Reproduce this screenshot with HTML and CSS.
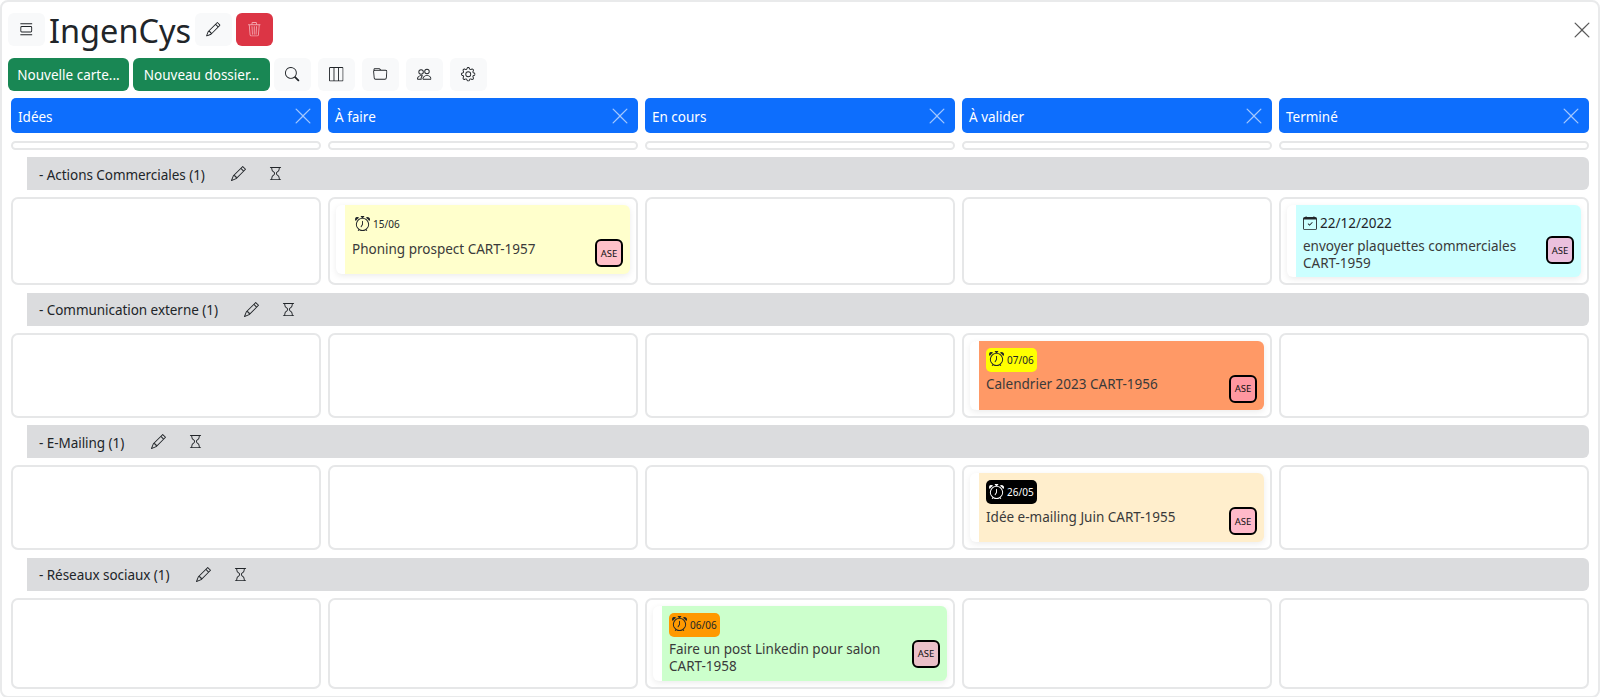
FILE: index.html
```html
<!DOCTYPE html>
<html lang="fr">
<head>
<meta charset="utf-8">
<title>IngenCys</title>
<link rel="stylesheet" href="styles.css">
</head>
<body>
<svg class="sprite" xmlns="http://www.w3.org/2000/svg">
<symbol id="i-pencil" viewBox="0 0 16 16"><path d="M12.146.146a.5.5 0 0 1 .708 0l3 3a.5.5 0 0 1 0 .708l-10 10a.5.5 0 0 1-.168.11l-5 2a.5.5 0 0 1-.65-.65l2-5a.5.5 0 0 1 .11-.168l10-10zM11.207 2.5 13.5 4.793 14.793 3.5 12.5 1.207 11.207 2.5zm1.586 3L10.5 3.207 4 9.707V10h.5a.5.5 0 0 1 .5.5v.5h.5a.5.5 0 0 1 .5.5v.5h.293l6.5-6.5zm-9.761 5.175-.106.106-1.528 3.821 3.821-1.528.106-.106A.5.5 0 0 1 5 12.5V12h-.5a.5.5 0 0 1-.5-.5V11h-.5a.5.5 0 0 1-.468-.325z"/></symbol>
<symbol id="i-trash" viewBox="0 0 16 16"><path d="M6.5 1h3a.5.5 0 0 1 .5.5v1H6v-1a.5.5 0 0 1 .5-.5ZM11 2.5v-1A1.5 1.5 0 0 0 9.5 0h-3A1.5 1.5 0 0 0 5 1.5v1H2.506a.58.58 0 0 0-.01 0H1.5a.5.5 0 0 0 0 1h.538l.853 10.66A2 2 0 0 0 4.885 16h6.23a2 2 0 0 0 1.994-1.84l.853-10.66h.538a.5.5 0 0 0 0-1h-.995a.59.59 0 0 0-.01 0H11Zm1.958 1-.846 10.58a1 1 0 0 1-.997.92h-6.23a1 1 0 0 1-.997-.92L3.042 3.5h9.916Zm-7.487 1a.5.5 0 0 1 .528.47l.5 8.5a.5.5 0 0 1-.998.06L5 5.03a.5.5 0 0 1 .47-.53Zm5.058 0a.5.5 0 0 1 .47.53l-.5 8.5a.5.5 0 1 1-.998-.06l.5-8.5a.5.5 0 0 1 .528-.47ZM8 4.5a.5.5 0 0 1 .5.5v8.5a.5.5 0 0 1-1 0V5a.5.5 0 0 1 .5-.5Z"/></symbol>
<symbol id="i-search" viewBox="0 0 16 16"><path d="M11.742 10.344a6.5 6.5 0 1 0-1.397 1.398h-.001c.03.04.062.078.098.115l3.85 3.85a1 1 0 0 0 1.415-1.414l-3.85-3.85a1.007 1.007 0 0 0-.115-.1zM12 6.5a5.5 5.5 0 1 1-11 0 5.5 5.5 0 0 1 11 0z"/></symbol>
<symbol id="i-cols" viewBox="0 0 16 16"><path d="M0 1.5A1.5 1.5 0 0 1 1.5 0h13A1.5 1.5 0 0 1 16 1.5v13a1.5 1.5 0 0 1-1.5 1.5h-13A1.5 1.5 0 0 1 0 14.5v-13zM1.5 1a.5.5 0 0 0-.5.5v13a.5.5 0 0 0 .5.5H5V1H1.5zM10 15V1H6v14h4zm1 0h3.5a.5.5 0 0 0 .5-.5v-13a.5.5 0 0 0-.5-.5H11v14z"/></symbol>
<symbol id="i-folder" viewBox="0 0 16 16"><path d="M.54 3.87.5 3a2 2 0 0 1 2-2h3.672a2 2 0 0 1 1.414.586l.828.828A2 2 0 0 0 9.828 3h3.982a2 2 0 0 1 1.992 2.181l-.637 7A2 2 0 0 1 13.174 14H2.826a2 2 0 0 1-1.991-1.819l-.637-7a1.99 1.99 0 0 1 .342-1.31zM2.19 4a1 1 0 0 0-.996 1.09l.637 7a1 1 0 0 0 .995.91h10.348a1 1 0 0 0 .995-.91l.637-7A1 1 0 0 0 13.81 4H2.19zm4.69-1.707A1 1 0 0 0 6.172 2H2.5a1 1 0 0 0-1 .981l.006.139C1.72 3.042 1.95 3 2.19 3h5.396l-.707-.707z"/></symbol>
<symbol id="i-people" viewBox="0 0 16 16"><path d="M15 14s1 0 1-1-1-4-5-4-5 3-5 4 1 1 1 1h8Zm-7.978-1A.261.261 0 0 1 7 12.996c.001-.264.167-1.03.76-1.72C8.312 10.629 9.282 10 11 10c1.717 0 2.687.63 3.24 1.276.593.69.758 1.457.76 1.72l-.008.002a.274.274 0 0 1-.014.002H7.022ZM11 7a2 2 0 1 0 0-4 2 2 0 0 0 0 4Zm3-2a3 3 0 1 1-6 0 3 3 0 0 1 6 0ZM6.936 9.28a5.88 5.88 0 0 0-1.23-.247A7.35 7.35 0 0 0 5 9c-4 0-5 3-5 4 0 .667.333 1 1 1h4.216A2.238 2.238 0 0 1 5 13c0-1.01.377-2.042 1.09-2.904.243-.294.526-.569.846-.816ZM4.92 10A5.493 5.493 0 0 0 4 13H1c0-.26.164-1.03.76-1.724.545-.636 1.492-1.256 3.16-1.275ZM1.5 5.5a3 3 0 1 1 6 0 3 3 0 0 1-6 0Zm3-2a2 2 0 1 0 0 4 2 2 0 0 0 0-4Z"/></symbol>
<symbol id="i-gear" viewBox="0 0 16 16"><path d="M8 4.754a3.246 3.246 0 1 0 0 6.492 3.246 3.246 0 0 0 0-6.492zM5.754 8a2.246 2.246 0 1 1 4.492 0 2.246 2.246 0 0 1-4.492 0z"/><path d="M9.796 1.343c-.527-1.79-3.065-1.79-3.592 0l-.094.319a.873.873 0 0 1-1.255.52l-.292-.16c-1.64-.892-3.433.902-2.54 2.541l.159.292a.873.873 0 0 1-.52 1.255l-.319.094c-1.79.527-1.79 3.065 0 3.592l.319.094a.873.873 0 0 1 .52 1.255l-.16.292c-.892 1.64.901 3.434 2.541 2.54l.292-.159a.873.873 0 0 1 1.255.52l.094.319c.527 1.79 3.065 1.79 3.592 0l.094-.319a.873.873 0 0 1 1.255-.52l.292.16c1.64.893 3.434-.902 2.54-2.541l-.159-.292a.873.873 0 0 1 .52-1.255l.319-.094c1.79-.527 1.79-3.065 0-3.592l-.319-.094a.873.873 0 0 1-.52-1.255l.16-.292c.893-1.64-.902-3.433-2.541-2.54l-.292.159a.873.873 0 0 1-1.255-.52l-.094-.319zm-2.633.283c.246-.835 1.428-.835 1.674 0l.094.319a1.873 1.873 0 0 0 2.693 1.115l.291-.16c.764-.415 1.6.42 1.184 1.185l-.159.292a1.873 1.873 0 0 0 1.116 2.692l.318.094c.835.246.835 1.428 0 1.674l-.319.094a1.873 1.873 0 0 0-1.115 2.693l.16.291c.415.764-.42 1.6-1.185 1.184l-.291-.159a1.873 1.873 0 0 0-2.693 1.116l-.094.318c-.246.835-1.428.835-1.674 0l-.094-.319a1.873 1.873 0 0 0-2.692-1.115l-.292.16c-.764.415-1.6-.42-1.184-1.185l.159-.291A1.873 1.873 0 0 0 1.945 8.93l-.319-.094c-.835-.246-.835-1.428 0-1.674l.319-.094A1.873 1.873 0 0 0 3.06 4.377l-.16-.292c-.415-.764.42-1.6 1.185-1.184l.292.159a1.873 1.873 0 0 0 2.692-1.115l.094-.319z"/></symbol>
<symbol id="i-hourglass" viewBox="0 0 16 16"><path d="M2 1.5a.5.5 0 0 1 .5-.5h11a.5.5 0 0 1 0 1h-1v1a4.5 4.5 0 0 1-2.557 4.06c-.29.139-.443.377-.443.59v.7c0 .213.154.451.443.59A4.5 4.5 0 0 1 12.5 13v1h1a.5.5 0 0 1 0 1h-11a.5.5 0 1 1 0-1h1v-1a4.5 4.5 0 0 1 2.557-4.06c.29-.139.443-.377.443-.59v-.7c0-.213-.154-.451-.443-.59A4.5 4.5 0 0 1 3.5 3V2h-1a.5.5 0 0 1-.5-.5zm2.5.5v1a3.5 3.5 0 0 0 1.989 3.158c.533.256 1.011.791 1.011 1.491v.702c0 .7-.478 1.235-1.011 1.491A3.5 3.5 0 0 0 4.5 13v1h7v-1a3.5 3.5 0 0 0-1.989-3.158C8.978 9.586 8.5 9.052 8.5 8.351v-.702c0-.7.478-1.235 1.011-1.491A3.5 3.5 0 0 0 11.5 3V2h-7z"/></symbol>
<symbol id="i-alarm" viewBox="0 0 16 16"><path d="M8.5 5.5a.5.5 0 0 0-1 0v3.362l-1.429 2.38a.5.5 0 1 0 .858.515l1.5-2.5A.5.5 0 0 0 8.5 9V5.5z"/><path d="M6.5 0a.5.5 0 0 0 0 1H7v1.07a7.001 7.001 0 0 0-3.273 12.474l-.602.602a.5.5 0 0 0 .707.708l.746-.746A6.97 6.97 0 0 0 8 16a6.97 6.97 0 0 0 3.422-.892l.746.746a.5.5 0 0 0 .707-.708l-.601-.602A7.001 7.001 0 0 0 9 2.07V1h.5a.5.5 0 0 0 0-1h-3zm1.038 3.018a6.093 6.093 0 0 1 .924 0 6 6 0 1 1-.924 0zM0 3.5c0 .753.333 1.429.86 1.887A8.035 8.035 0 0 1 4.387 1.86 2.5 2.5 0 0 0 0 3.5zM13.5 1c-.753 0-1.429.333-1.887.86a8.035 8.035 0 0 1 3.527 3.527A2.5 2.5 0 0 0 13.5 1z"/></symbol>
<symbol id="i-cal" viewBox="0 0 16 16"><path d="M10.854 7.146a.5.5 0 0 1 0 .708l-3 3a.5.5 0 0 1-.708 0l-1.5-1.5a.5.5 0 1 1 .708-.708L7.5 9.793l2.646-2.647a.5.5 0 0 1 .708 0z"/><path d="M3.5 0a.5.5 0 0 1 .5.5V1h8V.5a.5.5 0 0 1 1 0V1h1a2 2 0 0 1 2 2v11a2 2 0 0 1-2 2H2a2 2 0 0 1-2-2V3a2 2 0 0 1 2-2h1V.5a.5.5 0 0 1 .5-.5zM1 4v10a1 1 0 0 0 1 1h12a1 1 0 0 0 1-1V4H1z"/></symbol>
<symbol id="i-x" viewBox="0 0 16 16"><path d="M2.146 2.854a.5.5 0 1 1 .708-.708L8 7.293l5.146-5.147a.5.5 0 0 1 .708.708L8.707 8l5.147 5.146a.5.5 0 0 1-.708.708L8 8.707l-5.146 5.147a.5.5 0 0 1-.708-.708L7.293 8 2.146 2.854Z"/></symbol>
<symbol id="i-stack" viewBox="0 0 16 16"><path d="M1.5 1.5h13v1h-13zM1.5 13.5h13v1h-13zM3 4.5h10A1.5 1.5 0 0 1 14.5 6v4a1.5 1.5 0 0 1-1.5 1.5H3A1.5 1.5 0 0 1 1.5 10V6A1.5 1.5 0 0 1 3 4.5zm0 1a.5.5 0 0 0-.5.5v4a.5.5 0 0 0 .5.5h10a.5.5 0 0 0 .5-.5V6a.5.5 0 0 0-.5-.5z"/></symbol>
</svg>

<div class="window">
  <header class="title-row">
    <button class="btn btn-light"><svg class="ico"><use href="#i-stack"/></svg></button>
    <h1 class="title">IngenCys</h1>
    <button class="btn btn-light"><svg class="ico"><use href="#i-pencil"/></svg></button>
    <button class="btn btn-danger"><svg class="ico"><use href="#i-trash"/></svg></button>
    <button class="close-btn"><svg class="ico"><use href="#i-x"/></svg></button>
  </header>

  <nav class="toolbar">
    <button class="btn-green btn-new-card">Nouvelle carte...</button>
    <button class="btn-green btn-new-folder">Nouveau dossier...</button>
    <div class="tool-icons">
      <button class="btn btn-light"><svg class="ico"><use href="#i-search"/></svg></button>
      <button class="btn btn-light"><svg class="ico"><use href="#i-cols"/></svg></button>
      <button class="btn btn-light"><svg class="ico"><use href="#i-folder"/></svg></button>
      <button class="btn btn-light"><svg class="ico"><use href="#i-people"/></svg></button>
      <button class="btn btn-light"><svg class="ico"><use href="#i-gear"/></svg></button>
    </div>
  </nav>

  <main class="board">
    <div class="cols">
      <div class="col-head"><span>Idées</span><svg class="ico"><use href="#i-x"/></svg></div>
      <div class="col-head"><span>À faire</span><svg class="ico"><use href="#i-x"/></svg></div>
      <div class="col-head"><span>En cours</span><svg class="ico"><use href="#i-x"/></svg></div>
      <div class="col-head"><span>À valider</span><svg class="ico"><use href="#i-x"/></svg></div>
      <div class="col-head"><span>Terminé</span><svg class="ico"><use href="#i-x"/></svg></div>
    </div>
    <div class="cols cols-empty">
      <div class="cell cell-thin"></div><div class="cell cell-thin"></div><div class="cell cell-thin"></div><div class="cell cell-thin"></div><div class="cell cell-thin"></div>
    </div>

    <section class="group">
      <div class="group-head"><span class="group-name">- Actions Commerciales (1)</span><button class="gbtn"><svg class="ico"><use href="#i-pencil"/></svg></button><button class="gbtn"><svg class="ico"><use href="#i-hourglass"/></svg></button></div>
      <div class="cols">
        <div class="cell"></div>
        <div class="cell">
          <article class="card c-yellow">
            <div class="due"><svg class="ico"><use href="#i-alarm"/></svg><span>15/06</span></div>
            <div class="card-body"><p>Phoning prospect CART-1957</p><span class="avatar">ASE</span></div>
          </article>
        </div>
        <div class="cell"></div>
        <div class="cell"></div>
        <div class="cell">
          <article class="card c-cyan">
            <div class="date"><svg class="ico"><use href="#i-cal"/></svg><span>22/12/2022</span></div>
            <div class="card-body"><p>envoyer plaquettes commerciales CART-1959</p><span class="avatar">ASE</span></div>
          </article>
        </div>
      </div>
    </section>

    <section class="group">
      <div class="group-head"><span class="group-name">- Communication externe (1)</span><button class="gbtn"><svg class="ico"><use href="#i-pencil"/></svg></button><button class="gbtn"><svg class="ico"><use href="#i-hourglass"/></svg></button></div>
      <div class="cols">
        <div class="cell"></div>
        <div class="cell"></div>
        <div class="cell"></div>
        <div class="cell">
          <article class="card c-orange">
            <div class="due due-yellow"><svg class="ico"><use href="#i-alarm"/></svg><span>07/06</span></div>
            <div class="card-body"><p>Calendrier 2023 CART-1956</p><span class="avatar">ASE</span></div>
          </article>
        </div>
        <div class="cell"></div>
      </div>
    </section>

    <section class="group">
      <div class="group-head"><span class="group-name">- E-Mailing (1)</span><button class="gbtn"><svg class="ico"><use href="#i-pencil"/></svg></button><button class="gbtn"><svg class="ico"><use href="#i-hourglass"/></svg></button></div>
      <div class="cols">
        <div class="cell"></div>
        <div class="cell"></div>
        <div class="cell"></div>
        <div class="cell">
          <article class="card c-cream">
            <div class="due due-black"><svg class="ico"><use href="#i-alarm"/></svg><span>26/05</span></div>
            <div class="card-body"><p>Idée e-mailing Juin CART-1955</p><span class="avatar">ASE</span></div>
          </article>
        </div>
        <div class="cell"></div>
      </div>
    </section>

    <section class="group">
      <div class="group-head"><span class="group-name">- Réseaux sociaux (1)</span><button class="gbtn"><svg class="ico"><use href="#i-pencil"/></svg></button><button class="gbtn"><svg class="ico"><use href="#i-hourglass"/></svg></button></div>
      <div class="cols">
        <div class="cell"></div>
        <div class="cell"></div>
        <div class="cell">
          <article class="card c-green">
            <div class="due due-orange"><svg class="ico"><use href="#i-alarm"/></svg><span>06/06</span></div>
            <div class="card-body"><p>Faire un post Linkedin pour salon CART-1958</p><span class="avatar">ASE</span></div>
          </article>
        </div>
        <div class="cell"></div>
        <div class="cell"></div>
      </div>
    </section>
  </main>
</div>
</body>
</html>
```
FILE: styles.css
```css
* { box-sizing: border-box; }

html, body {
  margin: 0;
  height: 100%;
  background: #fff;
}

body {
  font-family: "Noto Sans", "Open Sans", sans-serif;
  font-size: 13.5px;
  color: #212529;
  overflow: hidden;
}

.sprite {
  width: 0;
  height: 0;
  display: block;
  overflow: hidden;
}

.ico {
  width: 16px;
  height: 16px;
  fill: currentColor;
  display: block;
  flex: none;
}

button {
  font: inherit;
  border: 0;
  padding: 0;
  margin: 0;
  cursor: pointer;
}

.window {
  height: 698px;
  background: #fff;
  border: 2px solid #e9eaeb;
  border-radius: 8px;
  padding: 11px 9px 0 6px;
}

.title-row {
  display: flex;
  align-items: center;
  height: 33px;
}

.btn {
  width: 37px;
  height: 33px;
  border-radius: 6px;
  display: flex;
  align-items: center;
  justify-content: center;
  flex: none;
}

.btn .ico {
  width: 14.5px;
  height: 14.5px;
}

.btn-light {
  background: #f8f9fa;
  color: #212529;
}

.btn-danger {
  background: #dc3545;
  color: #f3a5ae;
  margin-left: 4px;
}

.title {
  margin: 0 4px 0 4px;
  padding-top: 1px;
  font-size: 32.5px;
  font-weight: 400;
  line-height: 33px;
  width: 142px;
  white-space: nowrap;
}

.close-btn {
  margin-left: auto;
  margin-right: -3px;
  background: none;
  color: #5a5a5a;
  width: 20px;
  height: 20px;
}

.close-btn .ico {
  width: 20px;
  height: 20px;
}

.toolbar {
  display: flex;
  align-items: center;
  margin-top: 12px;
  height: 33px;
}

.btn-green {
  height: 33px;
  background: #198754;
  color: #fff;
  border-radius: 6px;
  white-space: nowrap;
  flex: none;
}

.btn-new-card { width: 121px; }
.btn-new-folder { width: 137px; margin-left: 4px; }

.tool-icons {
  display: flex;
  gap: 7px;
  margin-left: 4px;
}

.board {
  margin-top: 7px;
  padding-left: 3px;
}

.cols {
  display: grid;
  grid-template-columns: repeat(5, 310px);
  column-gap: 7px;
}

.col-head {
  height: 35px;
  background: #0d6efd;
  color: #fff;
  border-radius: 5px;
  display: flex;
  align-items: center;
  justify-content: space-between;
  padding: 2px 8px 0 7px;
}

.col-head .ico {
  color: #a4c8fe;
  width: 20px;
  height: 20px;
  margin-top: -2px;
}

.cols-empty {
  margin-top: 7.5px;
}

.cell {
  border: 2px solid #e6e7e8;
  border-radius: 7px;
  padding: 6px;
  background: #fff;
  min-height: 85px;
}

.cell-thin {
  min-height: 0;
  height: 9px;
  padding: 0;
}

.group {
  margin-top: 7.5px;
}

.group-head {
  margin-left: 16px;
  height: 33px;
  background: #dbdcde;
  border-radius: 0 6px 6px 0;
  display: flex;
  align-items: center;
  padding-left: 12px;
  margin-bottom: 7px;
}

.group-name {
  margin-right: 15.5px;
  padding-top: 2px;
  letter-spacing: -.05px;
  white-space: nowrap;
}

.gbtn {
  width: 37px;
  height: 33px;
  background: none;
  color: #212529;
  display: flex;
  align-items: center;
  justify-content: center;
}

.gbtn .ico {
  width: 15px;
  height: 15px;
}

.card {
  border-left: 9px solid #fff;
  border-radius: 6px;
  padding: 7px 7px 5.5px;
  box-shadow: 0 2px 6px rgba(0, 0, 0, .08);
  color: #3a3a3a;
}

.c-yellow { background: #ffffcc; }
.c-cyan { background: #ccffff; }
.c-orange { background: #ff9966; }
.c-cream { background: #ffeecc; }
.c-green { background: #ccffcc; }

.due {
  display: inline-flex;
  align-items: center;
  height: 24px;
  padding: 0 3px;
  gap: 3px;
  border-radius: 5px;
  font-size: 10px;
  color: #212529;
  vertical-align: top;
}

.due .ico {
  width: 15px;
  height: 15px;
  margin-top: -2px;
}

.due-yellow { background: #ffff00; }
.due-black { background: #000; color: #fff; }
.due-orange { background: #ff9900; }

.date {
  display: flex;
  align-items: center;
  height: 21px;
  gap: 3px;
  color: #212529;
}

.date .ico { width: 14px; height: 14px; }

.card-body {
  display: flex;
  justify-content: space-between;
  align-items: flex-start;
  margin-top: 3px;
}

.card-body p {
  margin: 0;
  padding: 1.5px 12px 0 0;
  line-height: 17px;
}

.avatar {
  flex: none;
  width: 28px;
  height: 28px;
  margin-bottom: 1.5px;
  border: 2px solid #000;
  border-radius: 6px;
  background: rgba(255, 150, 198, .6);
  font-size: 9.5px;
  color: #111;
  display: flex;
  align-items: center;
  justify-content: center;
}
```
